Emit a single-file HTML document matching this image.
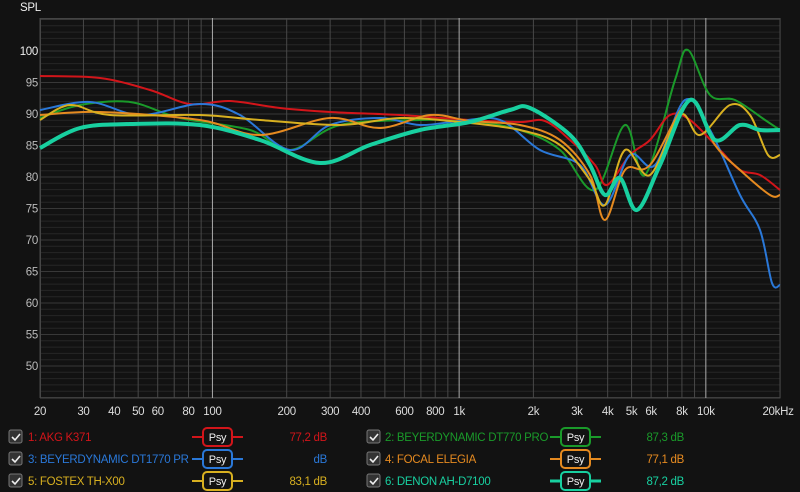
<!DOCTYPE html><html><head><style>
body{margin:0;background:#121212;width:800px;height:492px;overflow:hidden;font-family:"Liberation Sans",sans-serif;}
svg{position:absolute;left:0;top:0}
text{font-family:"Liberation Sans",sans-serif;letter-spacing:-0.3px}
</style></head><body>
<svg id="s" width="800" height="492" xmlns="http://www.w3.org/2000/svg"></svg>
<script>
const s=document.getElementById('s');let h='';
const X=f=>40+246.7*Math.log10(f/20), Y=d=>51+(100-d)*6.3;
for(let d=45;d<=105;d++){let y=Y(d);h+=`<line x1="40" x2="780" y1="${y}" y2="${y}" stroke="${d%5?'#262626':'#383838'}" stroke-width="1"/>`;}
h+=`<rect x="40.5" y="18.5" width="739.5" height="379.5" fill="none" stroke="#444"/>`;
const fs=[20,30,40,50,60,70,80,90,100,200,300,400,500,600,700,800,900,1000,2000,3000,4000,5000,6000,7000,8000,9000,10000,20000];
fs.forEach(f=>{let x=X(f);let dec=(f==100||f==1000||f==10000);h+=`<line x1="${x}" x2="${x}" y1="18" y2="398" stroke="${dec?'#aaa':'#484848'}"/>`;});
const lab=[[20,'20'],[30,'30'],[40,'40'],[50,'50'],[60,'60'],[80,'80'],[100,'100'],[200,'200'],[300,'300'],[400,'400'],[600,'600'],[800,'800'],[1000,'1k'],[2000,'2k'],[3000,'3k'],[4000,'4k'],[5000,'5k'],[6000,'6k'],[8000,'8k'],[10000,'10k']];
lab.forEach(([f,t])=>h+=`<text x="${X(f)}" y="415" fill="#ddd" font-size="11.5" text-anchor="middle">${t}</text>`);
h+=`<text x="778" y="415" fill="#ddd" font-size="11.5" text-anchor="middle">20kHz</text>`;
for(let d=50;d<=100;d+=5)h+=`<text x="38" y="${Y(d)+4}" fill="${d==100?'#eee':'#bbb'}" font-size="11.5" text-anchor="end">${d}</text>`;
h+=`<text x="20" y="11" fill="#eee" font-size="11.5">SPL</text>`;
function cr(p){let d=`M${p[0][0]},${p[0][1]}`;for(let i=0;i<p.length-1;i++){let a=p[i-1]||p[i],b=p[i],c=p[i+1],e=p[i+2]||c;d+=` C${b[0]+(c[0]-a[0])/6},${b[1]+(c[1]-a[1])/6} ${c[0]-(e[0]-b[0])/6},${c[1]-(e[1]-b[1])/6} ${c[0]},${c[1]}`;}return d;}
const C=[
['#1a9a2a',2,[[40,118],[80,105],[130,102],[180,118],[250,130],[290,150],[340,125],[420,120],[470,121],[520,130],[560,150],[595,190],[625,125],[645,175],[675,80],[688,50],[710,95],[735,100],[765,120],[780,130]]],
['#d2151a',2,[[40,76],[100,78],[150,90],[190,104],[230,101],[280,108],[330,112],[400,115],[470,120],[520,122],[545,121],[570,140],[595,165],[607,185],[630,155],[650,140],[670,115],[690,120],[720,150],[740,170],[760,175],[780,190]]],
['#2a78d8',2,[[40,110],[90,102],[140,115],[200,104],[240,115],[290,150],[330,125],[380,118],[420,125],[460,121],[500,120],[540,150],[580,165],[605,205],[630,155],[655,165],[685,100],[710,130],[740,195],[760,230],[772,283],[780,285]]],
['#e58a20',2,[[40,115],[100,112],[200,120],[260,135],[330,118],[380,128],[430,115],[470,121],[520,125],[560,140],[590,175],[605,220],[625,170],[650,165],[690,100],[715,145],[740,170],[770,195],[780,195]]],
['#d8b020',2,[[40,120],[70,105],[110,115],[200,115],[260,120],[340,125],[400,118],[460,122],[520,130],[560,145],[590,180],[605,205],[625,150],[650,175],[680,115],[700,135],[730,105],[750,115],[768,155],[780,155]]],
['#18d0a0',4,[[40,148],[80,128],[130,124],[200,125],[260,140],[320,163],[370,145],[420,130],[470,122],[510,110],[530,108],[570,135],[590,165],[605,195],[620,178],[637,210],[660,165],[690,100],[715,140],[740,125],[760,130],[780,130]]]];
C.forEach(([c,w,p])=>h+=`<path d="${cr(p)}" fill="none" stroke="${c}" stroke-width="${w}" stroke-linejoin="round"/>`);
const L=[[8,28,192,327,437,'#d2151a','1: AKG K371','77,2 dB'],[366,385,550,684,437,'#1a9a2a','2: BEYERDYNAMIC DT770 PRO','87,3 dB'],
[8,28,192,327,459,'#2a78d8','3: BEYERDYNAMIC DT1770 PR','dB'],[366,385,550,684,459,'#e58a20','4: FOCAL ELEGIA','77,1 dB'],
[8,28,192,327,481,'#d8b020','5: FOSTEX TH-X00','83,1 dB'],[366,385,550,684,481,'#18d0a0','6: DENON AH-D7100','87,2 dB']];
L.forEach(([cx,tx,px,dx,y,c,t,v],i)=>{
h+=`<rect x="${cx+1}" y="${y-7}" width="13" height="13" rx="2" fill="#333" stroke="#777"/><path d="M${cx+4},${y} l3,3 l5,-6" fill="none" stroke="#eee" stroke-width="1.6"/>`;
h+=`<text x="${tx}" y="${y+4}" fill="${c}" font-size="11.5">${t}</text>`;
h+=`<line x1="${px}" x2="${px+51}" y1="${y}" y2="${y}" stroke="${c}" stroke-width="${i==5?3:2}"/><rect x="${px+11}" y="${y-9}" width="29" height="18" rx="4" fill="#121212" stroke="${c}" stroke-width="2"/><text x="${px+25.5}" y="${y+4}" fill="#eee" font-size="11" text-anchor="middle">Psy</text>`;
h+=`<text x="${dx}" y="${y+4}" fill="${c}" font-size="11.5" text-anchor="end">${v}</text>`;});
s.innerHTML=h;
</script></body></html>
